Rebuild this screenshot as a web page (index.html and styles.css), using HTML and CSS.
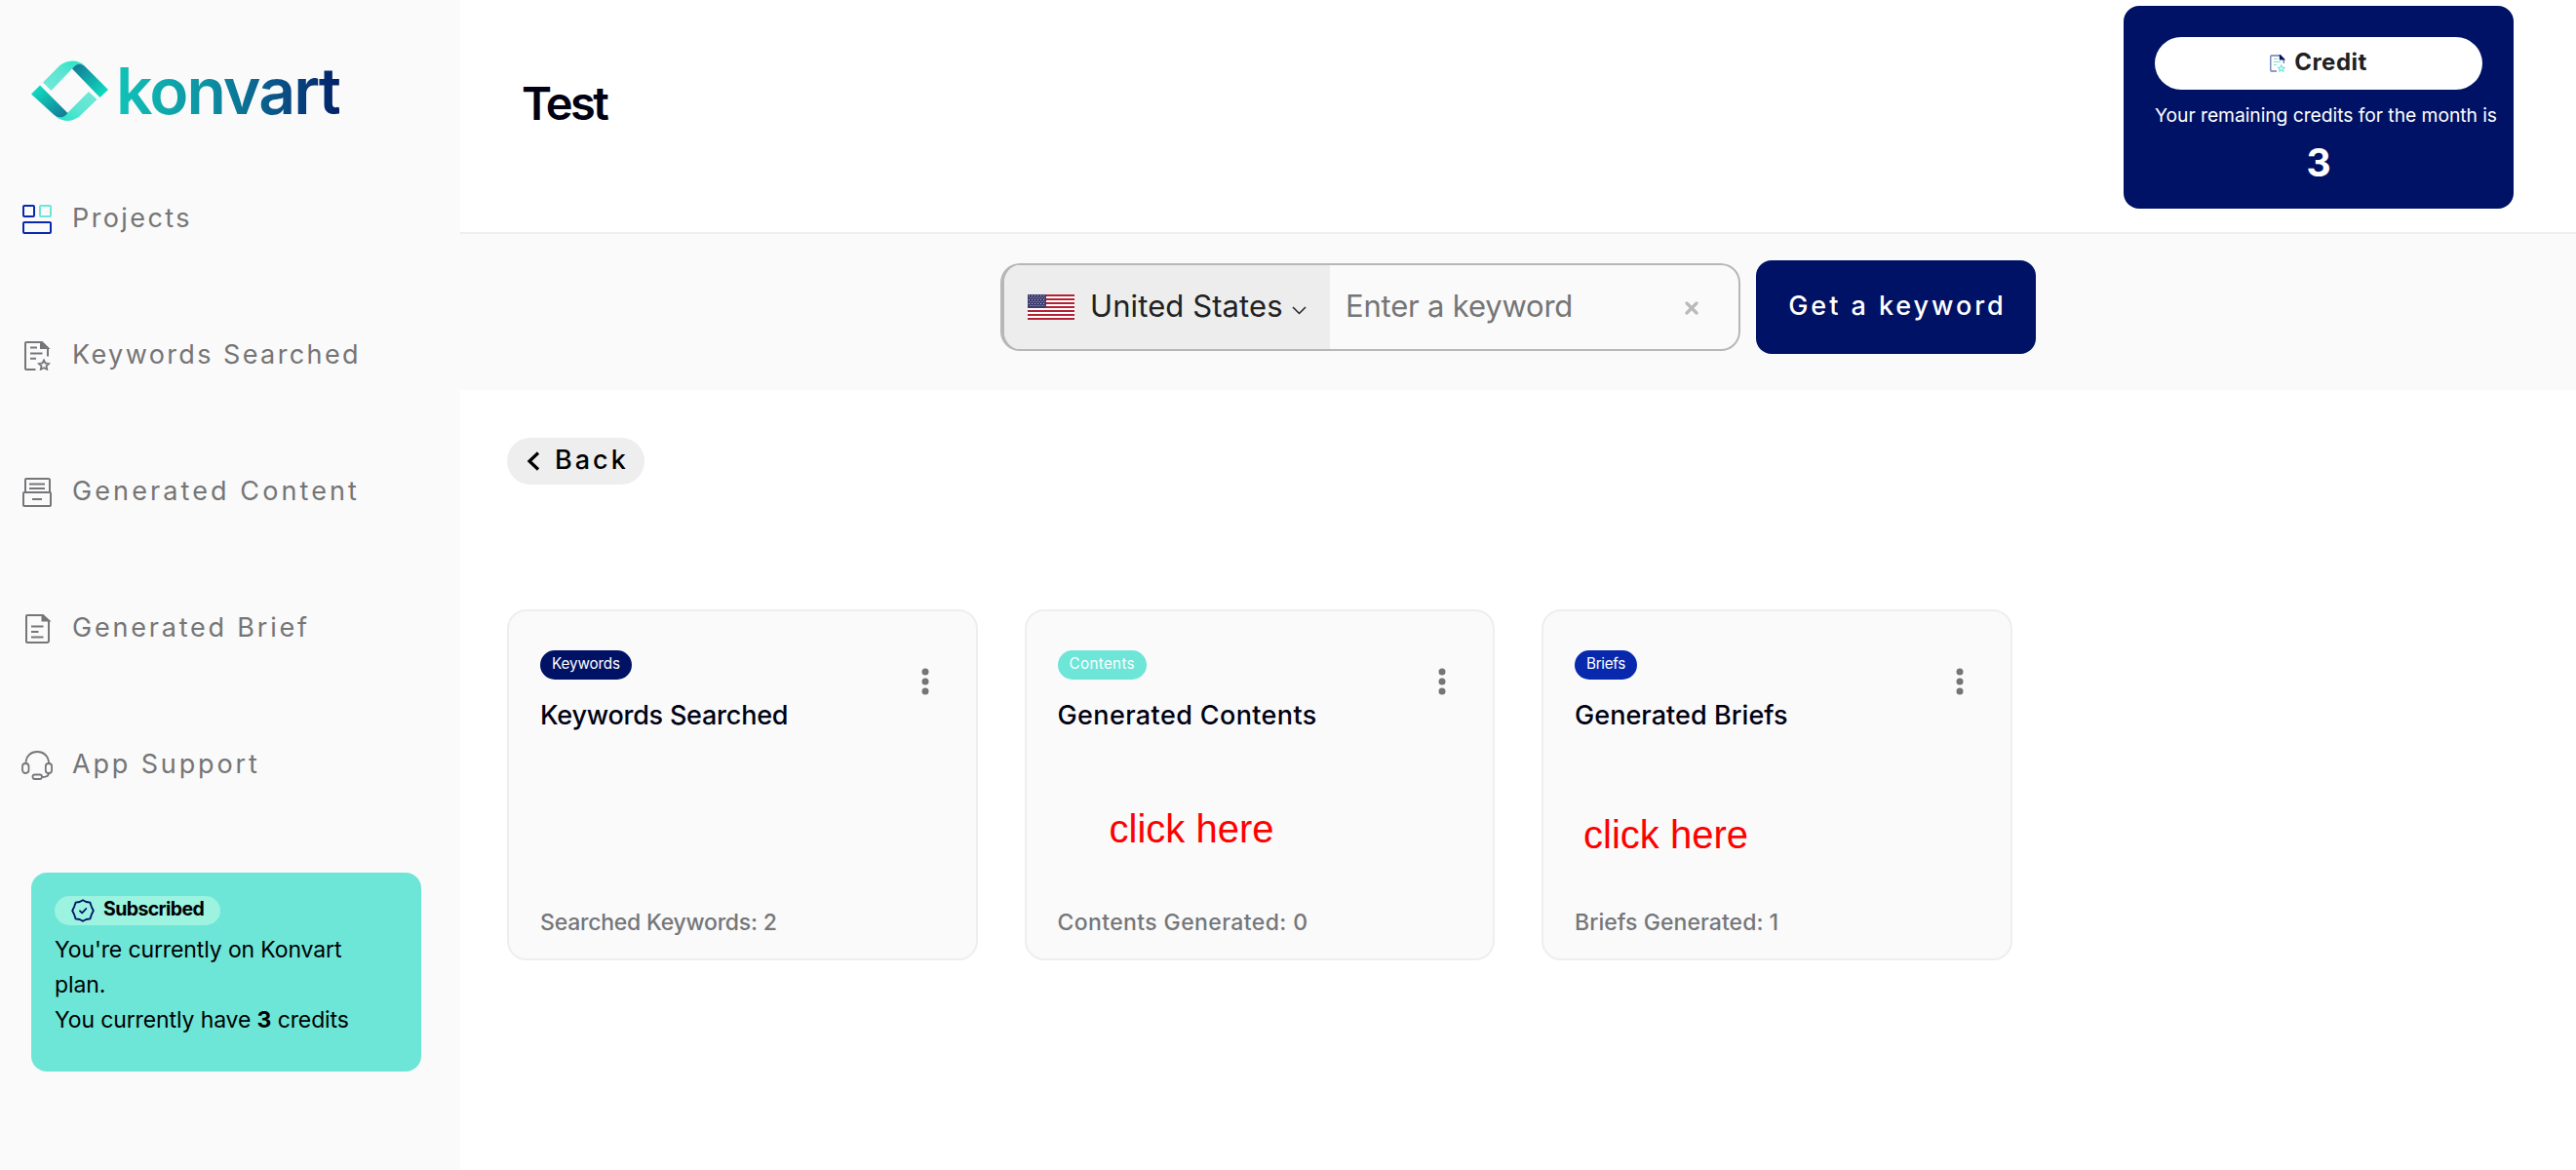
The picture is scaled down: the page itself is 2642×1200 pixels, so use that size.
FILE: index.html
```html
<!DOCTYPE html>
<html lang="en">
<head>
    <meta charset="UTF-8">
    <meta name="viewport" content="width=device-width, initial-scale=1.0">
    <title>Konvart</title>
    <link rel="stylesheet" href="styles.css">
</head>
<body>

<div class="app">
    <aside class="sidebar">
        <div class="logo">
            <svg class="logo-mark" width="80" height="64" viewBox="0 0 80 64">
                <defs>
                    <linearGradient id="light1" x1="0" y1="1" x2="1" y2="0"><stop offset="0" stop-color="#74e9db"/><stop offset="0.5" stop-color="#5ee5d2"/><stop offset="1" stop-color="#1de5c4"/></linearGradient>
                    <linearGradient id="light2" x1="1" y1="0" x2="0" y2="1"><stop offset="0" stop-color="#74e9db"/><stop offset="0.5" stop-color="#5ee5d2"/><stop offset="1" stop-color="#1de5c4"/></linearGradient>
                    <linearGradient id="dark1" x1="0" y1="0" x2="1" y2="1"><stop offset="0.1" stop-color="#137f97"/><stop offset="1" stop-color="#0fe8c6"/></linearGradient>
                    <linearGradient id="dark2" x1="1" y1="1" x2="0" y2="0"><stop offset="0.1" stop-color="#137f97"/><stop offset="1" stop-color="#0fe8c6"/></linearGradient>
                </defs>
                <path fill="url(#light1)" d="M12 23.5 L26 9.5 C34 0 47 -1.5 56 7 C50 3 46 5 42 9.5 L20.5 32 Z"/>
                <path fill="url(#dark1)" d="M42 9.5 C46 4 51 3 56 8 L79 31 L70.5 39 Z"/>
                <path fill="url(#light2)" d="M67.5 41 L53 55 C45 64 33 66 24 57.5 C29 61 33 60 37 55 L59 33 Z"/>
                <path fill="url(#dark2)" d="M37.5 55 C33 60.5 28 61 23 56.5 L0 35.5 L9 26.5 Z"/>
            </svg>
            <span class="logo-text">konvart</span>
        </div>

        <nav class="menu">
            <a class="menu-item">
                <svg width="30" height="30" viewBox="0 0 30 30" fill="none" stroke="#0829ad" stroke-width="2">
                    <rect x="1" y="1" width="11" height="11" rx="1"/>
                    <rect x="18" y="1" width="11" height="11" rx="1" stroke="#6de5d7"/>
                    <rect x="1" y="18" width="28" height="11" rx="1"/>
                </svg>
                <span>Projects</span>
            </a>
            <a class="menu-item">
                <svg width="30" height="30" viewBox="0 0 30 30" fill="none" stroke="#757679" stroke-width="2">
                    <path d="M13.5 29 H4 Q3 29 3 28 V2 Q3 1 4 1 H20 L26 7 V15.5 M8 6.5 H15 M8 12.5 H20.5 M8 17.8 H14"/>
                    <path d="M19 1 L26 7 H19 Z" fill="#757679"/>
                    <path stroke-width="1.8" d="M22 19.5 L23.5 22.5 L27 23 L24.5 25.3 L25.2 28.8 L22 27.2 L18.8 28.8 L19.5 25.3 L17 23 L20.5 22.5 Z"/>
                </svg>
                <span>Keywords Searched</span>
            </a>
            <a class="menu-item menu-item-content">
                <svg width="30" height="30" viewBox="0 0 30 30" fill="none" stroke="#757679" stroke-width="2">
                    <rect x="1" y="15" width="28" height="14" rx="1"/>
                    <path d="M3 15 V2 Q3 1 4 1 H26 Q28 1 28 2 V15 M7 6.5 H23 M7 11 H23 M10 22 H20"/>
                </svg>
                <span>Generated Content</span>
            </a>
            <a class="menu-item menu-item-brief">
                <svg width="30" height="30" viewBox="0 0 30 30" fill="none" stroke="#757679" stroke-width="2">
                    <path d="M21 1 H5 Q4 1 4 2 V28 Q4 29 5 29 H25 Q27 29 27 27 V7 Z M9 12.5 H21.5 M9 18 H16.5 M9 23.5 H21.5"/>
                    <path d="M20.5 1 L27 6.5 H20.5 Z" fill="#757679"/>
                </svg>
                <span>Generated Brief</span>
            </a>
            <a class="menu-item menu-item-support">
                <svg width="32" height="30" viewBox="0 0 32 30" fill="none" stroke="#757679" stroke-width="1.8">
                    <path d="M4.5 13 C4.5 5 10 1 16.2 1 S28 5 28 13"/>
                    <rect x="1" y="13" width="6.5" height="10" rx="3.2"/>
                    <rect x="24.8" y="13" width="6.3" height="10" rx="3.1"/>
                    <rect x="11.5" y="24.5" width="9.5" height="4.5" rx="2.2"/>
                    <path d="M28 23 C28 26 26 27 21.5 27"/>
                </svg>
                <span>App Support</span>
            </a>
        </nav>

        <div class="plan">
            <div class="plan-badge">
                <svg width="24" height="24" viewBox="0 0 24 24" fill="none" stroke="#001265" stroke-width="1.8" stroke-linejoin="round" stroke-linecap="round">
                    <path d="M12 1.2 L15.3 3 L19.4 3.6 L20.8 7.8 L22.8 12 L20.8 16.2 L19.4 20.4 L15.3 21 L12 22.8 L8.7 21 L4.6 20.4 L3.2 16.2 L1.2 12 L3.2 7.8 L4.6 3.6 L8.7 3 Z"/>
                    <path d="M9 12.3 L11.2 14.3 L15.3 10"/>
                </svg>
                <span class="plan-status">Subscribed</span>
            </div>
            <p class="plan-text">You're currently on Konvart plan.<br>You currently have <b>3</b> credits</p>
        </div>
    </aside>

    <main class="main">
        <header class="header">
            <h1 class="title">Test</h1>
            <div class="credit">
                <div class="credit-pill">
                    <svg width="16" height="18" viewBox="0 0 16 18" fill="none" stroke="#6f79ad" stroke-width="1.3">
                        <path d="M7 17 H1.5 Q.8 17 .8 16 V2 Q.8 1 1.5 1 H10.5 L14.3 4.5 V9"/>
                        <path d="M10.5 0.8 L14.5 4.8 H10.5 Z" fill="#001265" stroke="#001265"/>
                        <path stroke="#6de5d7" stroke-width="1.2" d="M4 4.5 H8 M4 7.5 H11 M4 10.5 H7"/>
                        <path stroke="#6de5d7" stroke-width="1.2" d="M11.8 11 L12.7 13 L15 13.3 L13.4 14.8 L13.8 17 L11.8 15.9 L9.8 17 L10.2 14.8 L8.6 13.3 L10.9 13 Z"/>
                    </svg>
                    <span class="credit-label">Credit</span>
                </div>
                <p class="credit-text">Your remaining credits for the month is</p>
                <p class="credit-count">3</p>
            </div>
        </header>

        <section class="search">
            <div class="search-box">
                <div class="country">
                    <svg class="flag" width="48" height="26" viewBox="0 0 48 26">
                        <rect width="48" height="26" fill="#fff"/>
                        <path stroke="#b22234" stroke-width="2" d="M0 1H48M0 5H48M0 9H48M0 13H48M0 17H48M0 21H48M0 25H48"/>
                        <rect width="19" height="14" fill="#3c3b6e"/>
                        <path stroke="#b9b9d0" stroke-width="1" stroke-dasharray="1 2" d="M1 1.5H18M2.5 3.5H18M1 5.5H18M2.5 7.5H18M1 9.5H18M2.5 11.5H18"/>
                    </svg>
                    <span class="country-name">United States</span>
                    <svg class="chevron" width="15" height="9" viewBox="0 0 15 9" fill="none" stroke="#212121" stroke-width="1.5"><path d="M1 1 L7.5 7.5 L14 1"/></svg>
                </div>
                <span class="placeholder">Enter a keyword</span>
                <svg class="clear" width="14" height="14" viewBox="0 0 14 14" stroke="#bababa" stroke-width="3.2" stroke-linecap="round"><path d="M2 2 L12 12 M12 2 L2 12"/></svg>
            </div>
            <button class="search-btn">Get a keyword</button>
        </section>

        <section class="content">
            <a class="back">
                <svg width="14" height="20" viewBox="0 0 14 20" fill="none" stroke="#000" stroke-width="3.2"><path d="M12 1.5 L3 10 L12 18.5"/></svg>
                <span>Back</span>
            </a>

            <div class="cards">
                <article class="card card-keywords">
                    <div class="card-head">
                        <div>
                            <span class="tag">Keywords</span>
                            <h2>Keywords Searched</h2>
                        </div>
                        <svg class="dots" width="8" height="28" viewBox="0 0 8 28" fill="#757575"><circle cx="4" cy="4" r="3.5"/><circle cx="4" cy="14" r="3.5"/><circle cx="4" cy="24" r="3.5"/></svg>
                    </div>
                    <p class="card-foot">Searched Keywords: 2</p>
                </article>
                <article class="card card-contents">
                    <div class="card-head">
                        <div>
                            <span class="tag">Contents</span>
                            <h2>Generated Contents</h2>
                        </div>
                        <svg class="dots" width="8" height="28" viewBox="0 0 8 28" fill="#757575"><circle cx="4" cy="4" r="3.5"/><circle cx="4" cy="14" r="3.5"/><circle cx="4" cy="24" r="3.5"/></svg>
                    </div>
                    <span class="note">click here</span>
                    <p class="card-foot">Contents Generated: 0</p>
                </article>
                <article class="card card-briefs">
                    <div class="card-head">
                        <div>
                            <span class="tag">Briefs</span>
                            <h2>Generated Briefs</h2>
                        </div>
                        <svg class="dots" width="8" height="28" viewBox="0 0 8 28" fill="#757575"><circle cx="4" cy="4" r="3.5"/><circle cx="4" cy="14" r="3.5"/><circle cx="4" cy="24" r="3.5"/></svg>
                    </div>
                    <span class="note">click here</span>
                    <p class="card-foot">Briefs Generated: 1</p>
                </article>
            </div>
        </section>
    </main>
</div>

</body>
</html>
```
FILE: styles.css
```css
* {
    box-sizing: border-box;
}
body {
    margin: 0;
    font-family: Inter, "Liberation Sans", sans-serif;
    color: #000;
    background: #fff;
}
h1, h2, p {
    margin: 0;
}
svg {
    display: block;
    flex: none;
}
.app {
    display: flex;
    height: 1200px;
    overflow: hidden;
}

/* sidebar */
.sidebar {
    width: 472px;
    flex: none;
    background: #fafafa;
}
.logo {
    display: flex;
    align-items: flex-start;
    padding: 61px 0 0 32px;
    height: 195px;
}
.logo-text {
    margin: -1px 0 0 7px;
    font-size: 66px;
    font-weight: 600;
    line-height: 66px;
    letter-spacing: -1.9px;
    color: transparent;
    background: linear-gradient(90deg, #11c3b8, #0d93a3 40%, #0b5c8c 68%, #022069);
    -webkit-background-clip: text;
    background-clip: text;
}
.menu {
    display: flex;
    flex-direction: column;
    gap: 80px;
}
.menu-item {
    display: flex;
    align-items: center;
    height: 60px;
    padding-left: 22px;
    font-size: 27px;
    letter-spacing: 2.4px;
    color: #757575;
    white-space: nowrap;
}
.menu-item-content {
    letter-spacing: 3.1px;
}
.menu-item-brief {
    letter-spacing: 2.8px;
}
.menu-item-support {
    letter-spacing: 2.85px;
}
.menu-item svg {
    width: 32px;
    margin-right: 20px;
}
.menu-item span {
    margin-top: -3px;
}
.plan {
    margin: 80px 0 0 32px;
    width: 400px;
    height: 204px;
    padding: 24px;
    border-radius: 16px;
    background: #6de5d7;
}
.plan-badge {
    display: flex;
    align-items: center;
    width: 170px;
    height: 30px;
    padding-left: 17px;
    border-radius: 15px;
    background: #9bf3e0;
    font-size: 19.5px;
    font-weight: 700;
    letter-spacing: -0.6px;
}
.plan-status {
    margin: -4px 0 0 9px;
}
.plan-text {
    margin-top: 7px;
    padding-right: 40px;
    font-size: 23px;
    line-height: 36px;
    letter-spacing: -0.12px;
}

/* top */
.main {
    flex: 1;
}
.header {
    display: flex;
    justify-content: space-between;
    height: 240px;
    padding: 6px 64px 0 63px;
    border-bottom: 2px solid #eee;
}
.title {
    padding-top: 71px;
    font-size: 47px;
    line-height: 58px;
    font-weight: 600;
    letter-spacing: -2.6px;
    color: #000113;
}
.credit {
    width: 400px;
    height: 208px;
    padding: 32px;
    border-radius: 16px;
    background: #001265;
    color: #fff;
}
.credit-pill {
    display: flex;
    justify-content: center;
    align-items: center;
    height: 54px;
    border-radius: 27px;
    background: #fff;
    color: #212121;
    font-size: 24px;
    font-weight: 700;
    letter-spacing: 0.5px;
}
.credit-label {
    margin: -3px 0 0 9px;
}
.credit-text {
    margin-top: 11px;
    font-size: 19.3px;
    line-height: 30px;
    letter-spacing: -0.05px;
    white-space: nowrap;
}
.credit-count {
    margin-top: 10px;
    font-size: 39px;
    line-height: 48px;
    font-weight: 700;
    text-align: center;
}

/* search */
.search {
    display: flex;
    align-items: center;
    justify-content: center;
    gap: 16px;
    height: 160px;
    padding-bottom: 10px;
    background: #fafafa;
}
.search-box {
    display: flex;
    align-items: center;
    width: 759px;
    height: 90px;
    border: 2px solid #b7b7b7;
    border-left-width: 4px;
    border-radius: 20px;
    overflow: hidden;
    font-size: 31px;
}
.country {
    display: flex;
    align-items: center;
    width: 334px;
    height: 86px;
    padding-left: 24px;
    background: #ededed;
    color: #212121;
}
.country-name {
    margin: -4px 9px 0 16px;
    letter-spacing: 0.1px;
    white-space: nowrap;
}
.chevron {
    margin-top: 7px;
}
.placeholder {
    margin: -4px 0 0 16px;
    letter-spacing: -0.2px;
    color: #757575;
}
.clear {
    margin: 1px 41px 0 auto;
}
.search-btn {
    width: 287px;
    height: 96px;
    padding: 0 0 3px 3px;
    border: 0;
    border-radius: 16px;
    background: #001265;
    color: #fff;
    font-family: inherit;
    font-size: 27px;
    font-weight: 500;
    letter-spacing: 2.95px;
}

/* content */
.content {
    padding: 49px 0 0 48px;
}
.back {
    display: flex;
    align-items: center;
    width: 141px;
    height: 48px;
    padding-left: 20px;
    border-radius: 24px;
    background: #eee;
    font-size: 27px;
    font-weight: 500;
    letter-spacing: 3px;
}
.back span {
    margin: -3px 0 0 15px;
}
.cards {
    display: grid;
    grid-template-columns: repeat(3, 482.5px);
    gap: 48px;
    margin-top: 128px;
}
.card {
    position: relative;
    display: flex;
    flex-direction: column;
    justify-content: space-between;
    height: 360px;
    padding: 40px 48px 19px 32px;
    border: 2px solid #eee;
    border-radius: 20px;
    background: #fafafa;
}
.card-head {
    display: flex;
    justify-content: space-between;
}
.card h2 {
    margin-top: 19px;
    font-size: 27px;
    line-height: 36px;
    font-weight: 500;
    color: #000113;
}
.tag {
    display: flex;
    width: fit-content;
    height: 30px;
    padding: 0 12px;
    border-radius: 15px;
    font-size: 15.2px;
    line-height: 27px;
    color: #fff;
}
.dots {
    margin-top: 18px;
}
.card-foot {
    font-size: 23px;
    line-height: 36px;
    font-weight: 500;
    color: #757679;
}

.card-keywords h2, .card-keywords .card-foot {
    letter-spacing: -0.23px;
}
.card-keywords .tag {
    background: #001265;
    letter-spacing: -0.1px;
}
.card-contents h2, .card-contents .card-foot {
    letter-spacing: 0.38px;
}
.card-contents .tag {
    background: #6de5d7;
    letter-spacing: 0.35px;
}
.card-briefs h2, .card-briefs .card-foot {
    letter-spacing: 0.05px;
}
.card-briefs .tag {
    background: #0829ad;
    letter-spacing: -0.3px;
}

/* red notes lie over the cards */
.note {
    position: absolute;
    font: 40px/46px "Liberation Sans", Arial, sans-serif;
    color: #f00;
}
.card-contents .note {
    left: 85px;
    top: 200px;
}
.card-briefs .note {
    left: 41px;
    top: 206px;
}
```
